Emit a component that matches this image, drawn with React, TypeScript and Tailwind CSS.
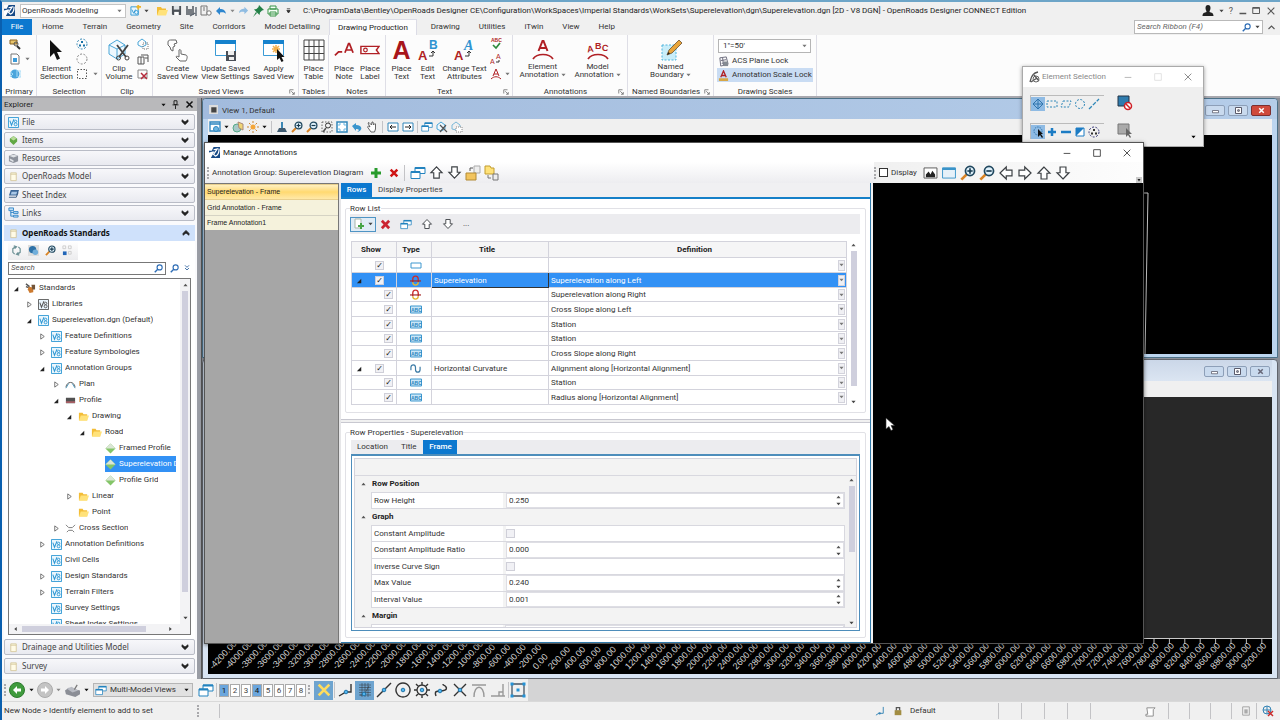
import type { ReactNode } from "react";

interface IconProps {
  children: ReactNode;
  box?: string;
  className?: string;
}

const Icon = ({ children, box = "0 0 12 12", className = "size-3" }: IconProps) => (
  <svg viewBox={box} className={`shrink-0 ${className}`} fill="none" aria-hidden="true">
    {children}
  </svg>
);

const Caret = ({ className = "text-[#444]" }: { className?: string }) => (
  <Icon box="0 0 6 4" className={`h-[4px] w-[5px] ${className}`}>
    <path d="M0.5 0.5h5L3 3.5z" fill="currentColor" />
  </Icon>
);

const UpCaret = () => (
  <Icon box="0 0 6 4" className="h-[4px] w-[5px] text-[#555]">
    <path d="M0.5 3.5h5L3 0.5z" fill="currentColor" />
  </Icon>
);

const Logo = ({ className = "size-[11px]" }: { className?: string }) => (
  <Icon className={className}>
    <path d="M0 0h12v12H0z" fill="#174a86" />
    <path d="M0 0h5L3 4H0zM0 6c3-1 5-1 6-1L2 12H0z" fill="#fff" />
    <path d="M5 3l4-1-4 6 2 2c3-1 4-4 4-8" stroke="#fff" strokeWidth="1.3" />
  </Icon>
);

const V8 = ({ dark = false }: { dark?: boolean }) => (
  <Icon className={dark ? "size-[11px] text-[#555]" : "size-[11px] text-[#2d97d3]"}>
    <path d="M0.5 0.5h11v11H.5z" stroke="currentColor" fill="#eaf6fd" />
    <path d="M2 4l1.8 5L6.5 2.5" stroke="currentColor" strokeWidth="1.1" />
    <circle cx="8.3" cy="4.8" r="1.3" stroke="currentColor" />
    <circle cx="8.3" cy="8" r="1.6" stroke="currentColor" />
  </Icon>
);

const Magnifier = ({ sign = "", className = "size-[13px]" }: { sign?: "" | "+" | "-"; className?: string }) => (
  <Icon className={className}>
    <path d="M5 7L1 11" stroke="#d98324" strokeWidth="2" />
    <circle cx="7.5" cy="4.5" r="3.4" stroke="#21485f" strokeWidth="1.3" fill="#dff1fb" />
    {sign && <path d={sign === "+" ? "M5.5 4.5h4M7.5 2.5v4" : "M5.5 4.5h4"} stroke="#16384d" strokeWidth="1.2" />}
  </Icon>
);

const SearchGlyph = ({ className = "size-[9px]" }: { className?: string }) => (
  <Icon className={className}>
    <circle cx="7.5" cy="4.5" r="3.4" stroke="#2d6cb5" strokeWidth="1.5" />
    <path d="M5 7L1 11" stroke="#2d6cb5" strokeWidth="1.8" />
  </Icon>
);

const arrowTurns = {
  up: "rotate-0",
  right: "rotate-90",
  down: "rotate-180",
  left: "-rotate-90",
};

const BlockArrow = ({ to, className = "size-3" }: { to: keyof typeof arrowTurns; className?: string }) => (
  <Icon className={`${className} ${arrowTurns[to]}`}>
    <path d="M6 1.5L1.5 6.2h2.3v4.3h4.4V6.2h2.3z" stroke="#3c4044" strokeWidth="0.9" fill="#fff" />
  </Icon>
);

const Windows = ({ className = "h-[13px] w-[15px]" }: { className?: string }) => (
  <Icon box="0 0 16 13" className={className}>
    <path d="M5 1h10v6H5z" stroke="#2383bf" fill="#fff" />
    <path d="M5 1.5h10" stroke="#2383bf" strokeWidth="2" />
    <path d="M1 5h9v7H1z" stroke="#2383bf" fill="#fff" />
    <path d="M1 5.5h9" stroke="#2383bf" strokeWidth="2" />
  </Icon>
);

const Cross = ({ className = "size-[10px] text-[#cf1414]" }: { className?: string }) => (
  <Icon className={className}>
    <path d="M2 2l8 8M10 2l-8 8" stroke="currentColor" strokeWidth="3" />
  </Icon>
);

const Folder = ({ className = "size-[11px]" }: { className?: string }) => (
  <Icon className={className}>
    <path d="M1 2h4l1 1.5h4V10H1z" fill="#f3bd37" />
    <path d="M3 5h9l-2 5.5H1z" fill="#ffe27a" />
  </Icon>
);

const Doc = () => (
  <Icon className="size-[11px]">
    <path d="M3 2h6v8.5H3z" fill="#fffbe6" stroke="#cdbf8d" strokeWidth="0.8" />
    <path d="M3 3.5h6" stroke="#cdbf8d" strokeWidth="0.8" />
  </Icon>
);

const Floppy = ({ className = "size-[11px]" }: { className?: string }) => (
  <Icon className={className}>
    <path d="M1 1h10v10H2L1 10z" fill="#4c5157" />
    <path d="M3 1h6v4H3z" fill="#dfe3e6" />
    <path d="M3.5 7.5h5V11h-5z" fill="#fff" />
  </Icon>
);

const Divider = ({ className = "h-3" }: { className?: string }) => (
  <span className={`w-px shrink-0 bg-[#c3c3c6] ${className}`} />
);

const Grip = () => <span className="h-3 w-0 shrink-0 border-l-2 border-dotted border-[#a9a9ac]" />;

const MinMaxClose = () => (
  <div className="flex items-center gap-5 text-[#333]">
    <button aria-label="Minimize">
      <Icon className="size-[10px]"><path d="M2 6.5h8" stroke="currentColor" /></Icon>
    </button>
    <button aria-label="Maximize">
      <Icon className="size-[10px]"><path d="M2 2h8v8H2z" stroke="currentColor" /></Icon>
    </button>
    <button aria-label="Close">
      <Icon className="size-[10px]"><path d="M2 2l8 8M10 2l-8 8" stroke="currentColor" /></Icon>
    </button>
  </div>
);

const TitleBar = () => (
  <header className="flex h-[17px] items-center bg-[#f0f0f0] pr-1 pl-[2px]">
    <Logo />
    <div className="ml-[5px] flex h-[14px] w-[106px] items-center border border-[#c4c4c4] bg-white pr-[3px]">
      <select aria-label="Workflow" className="w-full appearance-none pl-px leading-[11px]">
        <option>OpenRoads Modeling</option>
      </select>
      <Caret className="text-[#777]" />
    </div>
    <div className="ml-1 flex items-center gap-[3px]">
      <Icon className="size-[11px]">
        <path d="M1 2h8v9H1z" stroke="#2d97d3" fill="#eaf6fd" />
        <path d="M2 5l2 4 2-4" stroke="#2d97d3" />
        <circle cx="7" cy="8" r="2" stroke="#2d97d3" />
        <path d="M9 0v5M7 2h5" stroke="#f0b429" strokeWidth="2" />
      </Icon>
      <Caret />
      <span className="ml-1"><Folder className="size-3" /></span>
      <Floppy />
      <Icon className="size-3">
        <path d="M1 1h8v9H1z" fill="#777c82" />
        <path d="M3 1h4v3H3z" fill="#eee" />
        <path d="M11 2v9M5 11l5-3" stroke="#5d6570" strokeWidth="1.4" />
      </Icon>
      <Icon className="size-3">
        <path d="M1 1h6v9H1zM3 3h2M3 5h2" stroke="#777" />
        <circle cx="9" cy="8" r="2.2" stroke="#777" fill="#fff" />
      </Icon>
      <Icon className="size-3"><path d="M5 2L1 6l4 4V7.5c3-.5 5 0 6 1.5-.5-4-3-5-6-5z" fill="#2d86cf" /></Icon>
      <Caret className="text-[#888]" />
      <Icon className="size-[11px] -scale-x-100"><path d="M5 2L1 6l4 4V7.5c3-.5 5 0 6 1.5-.5-4-3-5-6-5z" fill="#8fbce2" /></Icon>
      <Icon className="size-3">
        <path d="M7 0l5 5-2 .5-2 2L7.5 10 2 4.5 4.5 4l2-2zM4 7l1 1-4 4z" fill="#238047" />
      </Icon>
      <Icon className="size-3">
        <path d="M3 1h6v3H3zM1 4h10v5H1zM3 7h6v4H3z" stroke="#3b9449" fill="#f5fff6" />
      </Icon>
      <Icon box="0 0 6 6" className="ml-1 size-[5px]"><path d="M1 1h4M1 3h4L3 6z" stroke="#333" fill="#333" /></Icon>
    </div>
    <h1 className="ml-[12px] whitespace-nowrap text-[#222]">
      C:\ProgramData\Bentley\OpenRoads Designer CE\Configuration\WorkSpaces\Imperial Standards\WorkSets\Superelevation\dgn\Superelevation.dgn [2D - V8 DGN] - OpenRoads Designer CONNECT Edition
    </h1>
    <div className="ml-auto flex items-center gap-[5px] text-[#555]">
      <Icon><path d="M3.5 3a2.5 3 0 0 1 5 0c0 2-1 2.5-1 4 2 .5 4 1 4 4H.5c0-3 2-3.5 4-4 0-1.5-1-2-1-4z" fill="#222" /></Icon>
      <Caret />
      <button className="text-[9px]">?</button>
      <button aria-label="Minimize application"><Icon className="size-[9px]"><path d="M2 10h9" stroke="currentColor" strokeWidth="2" /></Icon></button>
      <button aria-label="Restore application"><Icon className="size-[9px]"><path d="M1 2h9v8H1zM1 3h9" stroke="currentColor" strokeWidth="1.3" /></Icon></button>
      <button aria-label="Close application"><Icon className="size-[10px]"><path d="M2 2l8 8M10 2l-8 8" stroke="currentColor" strokeWidth="1.3" /></Icon></button>
    </div>
  </header>
);

const tabs = ["Home", "Terrain", "Geometry", "Site", "Corridors", "Model Detailing", "Drawing Production", "Drawing", "Utilities", "iTwin", "View", "Help"];

const RibbonTabs = () => (
  <nav className="flex h-4 items-stretch bg-[#f0f0f0]">
    <button className="w-[30px] bg-[#0c78cf] text-white">File</button>
    {tabs.map((tab) => (
      <button
        key={tab}
        className={
          tab === "Drawing Production"
            ? "mr-1 border border-b-0 border-[#dcdce6] bg-[#fdfdfd] px-2 text-[#222]"
            : "pr-[9px] pl-[10px] text-[#333]"
        }
      >
        {tab}
      </button>
    ))}
    <div className="mr-1 ml-auto flex items-center gap-1">
      <div className="flex h-[14px] w-[129px] items-center gap-1 border border-[#b9b9b9] bg-white px-[2px]">
        <input aria-label="Search ribbon" placeholder="Search Ribbon (F4)" className="min-w-0 flex-1 italic outline-none placeholder:text-[#666]" />
        <SearchGlyph />
        <Caret />
      </div>
      <Icon className="size-[9px]"><path d="M2 8l4-4 4 4" stroke="#555" strokeWidth="1.5" /></Icon>
    </div>
  </nav>
);

interface ToolProps {
  icon: ReactNode;
  lines: [string, string];
  menu?: boolean;
  className?: string;
}

const Tool = ({ icon, lines, menu, className = "" }: ToolProps) => (
  <button className={`flex shrink-0 flex-col items-center justify-start text-[#333] ${className}`}>
    <span className="flex h-6 items-center">{icon}</span>
    <span className={`leading-[8px] whitespace-nowrap ${menu ? "mt-px" : "mt-[3px]"}`}>{lines[0]}</span>
    <span className="flex items-center gap-[2px] leading-[8px] whitespace-nowrap">
      {lines[1]}
      {menu && <Caret className="text-[#777]" />}
    </span>
  </button>
);

interface GroupProps {
  title: string;
  children: ReactNode;
  launcher?: boolean;
  className: string;
}

const Group = ({ title, children, launcher, className }: GroupProps) => (
  <section className={`flex shrink-0 flex-col border-r border-[#dedee6] ${className}`}>
    <div className="flex flex-1 justify-center pt-[3px]">{children}</div>
    <div className="flex h-2 items-center text-[#333]">
      <span className="flex-1 text-center whitespace-nowrap">{title}</span>
      {launcher && (
        <button aria-label={`${title} settings`} className="mr-[3px]">
          <Icon box="0 0 8 8" className="size-[6px]"><path d="M1 6V1h5M3 3l4 4M7 4v3H4" stroke="#666" /></Icon>
        </button>
      )}
    </div>
  </section>
);

const SmallStack = ({ children, className = "" }: { children: ReactNode; className?: string }) => (
  <div className={`flex flex-col items-start gap-[3px] ${className}`}>{children}</div>
);

const Ribbon = () => (
  <div className="flex h-[63px] border-b-2 border-[#a8a8ae] bg-[#fcfcfc]">
    <Group title="Primary" className="w-[35px]">
      <SmallStack>
        <Icon><path d="M1 2h7v4H1z" fill="#e8c46a" stroke="#866020" /><circle cx="7" cy="6" r="2" stroke="#555" /><path d="M8 8l3 3" stroke="#333" strokeWidth="2" /></Icon>
        <div className="flex items-center gap-1">
          <Icon><path d="M2 1h6l2 2v8H2z" stroke="#777" fill="#fff" /><path d="M4 5h4v4H4z" fill="#3a9ad9" /></Icon>
          <Caret className="text-[#777]" />
        </div>
        <Icon><circle cx="6" cy="6" r="4.5" fill="#4aa5dc" /><path d="M1 4l3 2-3 3M8 2v7M9 3h3v6H9" stroke="#a8dcf7" /></Icon>
      </SmallStack>
    </Group>
    <Group title="Selection" className="w-[65px]">
      <Tool
        lines={["Element", "Selection"]}
        icon={<Icon box="0 0 16 24" className="h-6 w-4"><path d="M2 2v17l4-4 3 7 3-1.5-3-6.5h5z" fill="#111" /></Icon>}
      />
      <SmallStack className="ml-[3px]">
        <Icon><circle cx="6" cy="6" r="5" stroke="#3688b5" strokeDasharray="2 1.5" /><path d="M5 4h2M3 7.5h2M7 7.5h2" stroke="#1672a8" strokeWidth="1.8" /></Icon>
        <Icon><circle cx="6" cy="6" r="5" stroke="#888" strokeDasharray="2 1.5" /></Icon>
        <div className="flex items-center gap-[5px]">
          <Icon><path d="M1.5 1.5h9v9h-9z" stroke="#555" strokeDasharray="1.5 1.5" /></Icon>
          <Caret className="text-[#777]" />
        </div>
      </SmallStack>
    </Group>
    <Group title="Clip" className="w-[51px]">
      <Tool
        lines={["Clip", "Volume"]}
        icon={
          <Icon box="0 0 24 24" className="size-6">
            <path d="M2 7l8-5 8 5v9l-8 5-8-5zM2 7l8 4 8-4M10 11v9" stroke="#4aa6d8" fill="#eef8fe" />
            <path d="M10 7l9 12M21 7l-9 12" stroke="#444" strokeWidth="1.8" />
            <circle cx="11.5" cy="20" r="2" stroke="#444" /><circle cx="20" cy="20" r="2" stroke="#444" />
          </Icon>
        }
      />
      <SmallStack className="ml-1">
        <Icon><path d="M1 4l4-3 4 3v3L5 9 1 7z" stroke="#4aa6d8" /><path d="M6 5h5v6H6z" stroke="#777" strokeDasharray="1 1" /></Icon>
        <Icon><path d="M1 4h6v7H1zM4 2h7v7M8 5h3M4 4v7" stroke="#555" /></Icon>
        <Icon><path d="M1 2h9v8H1z" stroke="#888" /><path d="M4 5l6 6M10 5l-6 6" stroke="#b52a3b" strokeWidth="1.5" /></Icon>
      </SmallStack>
    </Group>
    <Group title="Saved Views" launcher className="w-[146px]">
      <Tool
        className="w-[44px]"
        lines={["Create", "Saved View"]}
        icon={
          <Icon box="0 0 24 24" className="size-6">
            <path d="M2 4c0-2 2-2 4-2h4l1 3-3 1 1 2-2 1v4l-2-1-1-3-2-2zM13 12c1-1 2 0 2 1v3l5 1c2 1 1 4 0 6h-6l-4-4c0-1 1-1 3 0z" stroke="#666" fill="#fff" />
          </Icon>
        }
      />
      <Tool
        className="w-[52px]"
        lines={["Update Saved", "View Settings"]}
        icon={
          <Icon box="0 0 24 24" className="size-6">
            <path d="M1.5 2.5h20v15h-20z" stroke="#3a9bd6" fill="#fff" /><path d="M1 2h21v4H1z" fill="#1682cd" />
            <path d="M12 13h10v10H12z" fill="#4a4f57" /><path d="M14 13h6v4h-6zM15 19h5v3h-5z" fill="#eee" />
          </Icon>
        }
      />
      <Tool
        className="w-[44px]"
        lines={["Apply", "Saved View"]}
        icon={
          <Icon box="0 0 24 24" className="size-6">
            <path d="M1.5 2.5h20v15h-20z" stroke="#3a9bd6" fill="#fff" /><path d="M1 2h21v4H1z" fill="#1682cd" />
            <path d="M14 7v8M10 11h8M11 8l6 6M17 8l-6 6" stroke="#f3b04c" strokeWidth="1.5" />
            <path d="M15 11v11l2.5-2 2 4 2-1-2-4h3z" fill="#111" />
          </Icon>
        }
      />
    </Group>
    <Group title="Tables" className="w-[30px]">
      <Tool
        lines={["Place", "Table"]}
        icon={<Icon box="0 0 24 24" className="size-6"><path d="M2 2h20v20H2zM7 2v20M12 2v20M17 2v20M2 8.5h20M2 15.5h20" stroke="#444" /></Icon>}
      />
    </Group>
    <Group title="Notes" className="w-[57px]">
      <Tool
        className="w-[26px]"
        lines={["Place", "Note"]}
        icon={<Icon box="0 0 22 22" className="h-[22px] w-5"><path d="M1 17l4-4h4M12 14l4-10h1l4 10M14 11h5" stroke="#b01f24" strokeWidth="1.9" /></Icon>}
      />
      <Tool
        className="w-[26px]"
        lines={["Place", "Label"]}
        icon={<Icon box="0 0 22 22" className="h-[22px] w-5"><path d="M1 7h20l-3 4 3 4H1z" stroke="#b01f24" strokeWidth="1.6" /><circle cx="6" cy="11" r="2" stroke="#b01f24" strokeWidth="1.3" /></Icon>}
      />
    </Group>
    <Group title="Text" launcher className="w-[127px]">
      <Tool
        className="w-[26px]"
        lines={["Place", "Text"]}
        icon={<span className="font-['Liberation_Sans'] text-[25px] leading-6 font-bold text-[#a8151b]">A</span>}
      />
      <Tool
        className="w-[26px]"
        lines={["Edit", "Text"]}
        icon={
          <Icon box="0 0 22 24" className="h-6 w-[22px]">
            <text x="1" y="22" fontSize="13" fontWeight="bold" fill="#b01f24" fontFamily="Liberation Sans">A</text>
            <text x="12" y="11" fontSize="12" fontWeight="bold" fill="#2f93d1" fontFamily="Liberation Sans">B</text>
            <path d="M12 18h4v-5M14 15l2-2 2 2" stroke="#333" />
          </Icon>
        }
      />
      <Tool
        className="w-[48px]"
        lines={["Change Text", "Attributes"]}
        icon={
          <Icon box="0 0 22 24" className="h-6 w-[22px]">
            <text x="0" y="22" fontSize="13" fontWeight="bold" fill="#b01f24" fontFamily="Liberation Sans">A</text>
            <text x="10" y="12" fontSize="14" fontStyle="italic" fontWeight="bold" fill="#2f93d1" fontFamily="Liberation Serif">A</text>
            <path d="M11 18h4v-5M13 15l2-2 2 2" stroke="#333" />
          </Icon>
        }
      />
      <SmallStack className="ml-px">
        <Icon><text x="1" y="4" fontSize="5" fontWeight="bold" fill="#b01f24" fontFamily="Liberation Sans">ABC</text><path d="M3 7l3 3 4-5" stroke="#2e8b3d" strokeWidth="1.7" /></Icon>
        <Icon><text x="0" y="11" fontSize="7" fill="#b01f24" fontFamily="Liberation Sans">A</text><text x="6" y="6" fontSize="7" fill="#b01f24" fontFamily="Liberation Sans">A</text><path d="M6 9h3V7" stroke="#333" /></Icon>
        <div className="flex items-center gap-[3px]">
          <Icon><path d="M3 8l3-7 3 7M4 6h4M1 11c3-3 7-3 10 0" stroke="#b01f24" /></Icon>
          <Caret className="text-[#777]" />
        </div>
      </SmallStack>
    </Group>
    <Group title="Annotations" launcher className="w-[115px]">
      <Tool
        menu
        className="w-[55px]"
        lines={["Element", "Annotation"]}
        icon={<Icon box="0 0 24 24" className="size-6"><path d="M7.5 13L11.5 3h1l4 10M9 10h6" stroke="#b01f24" strokeWidth="2" /><path d="M2 21c4-6 16-6 20 0" stroke="#b01f24" strokeWidth="1.7" /></Icon>}
      />
      <Tool
        menu
        className="w-[55px]"
        lines={["Model", "Annotation"]}
        icon={
          <Icon box="0 0 24 24" className="size-6">
            <text x="1" y="14" fontSize="9" fontWeight="bold" fill="#b01f24" fontFamily="Liberation Sans" transform="rotate(-8 4 11)">A</text>
            <text x="9" y="11" fontSize="9" fontWeight="bold" fill="#b01f24" fontFamily="Liberation Sans">B</text>
            <text x="16" y="13" fontSize="9" fontWeight="bold" fill="#b01f24" fontFamily="Liberation Sans" transform="rotate(8 19 10)">C</text>
            <path d="M2 21c4-6 16-6 20 0" stroke="#b01f24" strokeWidth="1.7" />
          </Icon>
        }
      />
    </Group>
    <Group title="Named Boundaries" launcher className="w-[86px]">
      <Tool
        menu
        lines={["Named", "Boundary"]}
        icon={
          <Icon box="0 0 24 24" className="size-6">
            <path d="M3 7h14v15H3z" stroke="#51b5dd" fill="#c8edf9" strokeDasharray="2 1.5" />
            <path d="M8 17l2-5L20 2l3 3-10 10z" fill="#e9a53b" stroke="#6b5030" strokeWidth="0.8" />
            <path d="M8 17l1.5-3 1.5 1.5z" fill="#222" />
          </Icon>
        }
      />
    </Group>
    <Group title="Drawing Scales" className="w-[103px]">
      <div className="flex w-[96px] flex-col text-[#333]">
        <div className="mt-px ml-px flex h-[14px] w-[93px] items-center border border-[#b5b5b5] bg-white pr-[3px]">
          <select aria-label="Annotation scale" className="w-full appearance-none pl-1 leading-3">
            <option>1"=50'</option>
          </select>
          <Caret className="text-[#777]" />
        </div>
        <button className="mt-px flex h-[14px] items-center gap-[3px] pl-px">
          <Icon className="size-[11px]"><path d="M2 2l7-1 2 8-8 2zM3 5l6-1M4 8l6-1M5 2l1 8" stroke="#667" /><path d="M6 6h5v5H6z" fill="#858b93" /></Icon>
          ACS Plane Lock
        </button>
        <button className="flex h-[14px] items-center gap-[3px] bg-[#c9dcf3] pl-px whitespace-nowrap">
          <Icon className="size-[11px]"><path d="M3 8l3-7 3 7M4 6h4" stroke="#b01f24" strokeWidth="1.4" /><path d="M1 9h10v3H1z" fill="#d7a747" /></Icon>
          Annotation Scale Lock
        </button>
      </div>
    </Group>
  </div>
);

const DoubleChevron = ({ up = false }: { up?: boolean }) => (
  <Icon box="0 0 10 8" className={`h-[6px] w-2 ${up ? "rotate-180" : ""}`}>
    <path d="M1 1l4 3 4-3v2.5L5 7.5 1 3.5z" fill="#222" stroke="#222" />
  </Icon>
);

const Section = ({ icon, label }: { icon: ReactNode; label: string }) => (
  <button className="flex h-4 w-full items-center gap-[3px] rounded-[2px] border border-[#b9bcc6] bg-linear-to-b from-[#f7f7fa] to-[#e9eaf0] pr-[5px] pl-[3px] text-left font-['Noto_Sans'] text-[#444]">
    {icon}
    <span className="flex-1">{label}</span>
    <DoubleChevron />
  </button>
);

const sections = [
  { label: "File", icon: <V8 /> },
  { label: "Items", icon: <Icon className="size-[11px]"><path d="M6 1l4 3v3l-4 4-4-4V4z" fill="#62a845" /><path d="M6 1l3 3-3 2-3-2z" fill="#b9dc9a" /></Icon> },
  { label: "Resources", icon: <Icon className="size-[11px]"><path d="M1 3l5-2 5 2v6l-5 2-5-2z" fill="#8d929c" /><path d="M1 3l5-1 5 1-5 2zM2 6l4 2v2L2 8z" fill="#dfe2e6" /></Icon> },
  { label: "OpenRoads Model", icon: <Doc /> },
  { label: "Sheet Index", icon: <Icon className="size-[11px]"><path d="M3 1h9l-2 6H1z" fill="#3c6697" /><path d="M4 3h6L9 6H3z" fill="#a8c6e6" /><path d="M1 9h8l2-5" stroke="#36577e" /></Icon> },
  { label: "Links", icon: <Icon className="size-[11px]"><path d="M1 1h5v3H1zM6 5h5v2H6zM6 9h5v2H6zM3 4v6h3M3 6h3" stroke="#3486c7" fill="#bfe0f7" /></Icon> },
];

type Kind = "root" | "library" | "v8" | "plan" | "profile" | "folder" | "diamond" | "section";

const kindIcons: Record<Kind, ReactNode> = {
  root: <Icon className="size-[11px]"><path d="M1 1l4 3M1 4l3 1" stroke="#555" strokeWidth="1.5" /><path d="M4 4l5 1v5l-4 1-2-4z" fill="#cc7a2f" /><path d="M7 2h4v5H8z" fill="#71543a" /></Icon>,
  library: <V8 dark />,
  v8: <V8 />,
  plan: <Icon className="size-[11px]"><path d="M1 9c1-7 9-7 10 0" stroke="#555" /><path d="M1 10l3-5M8 5l3 5" stroke="#4e99bd" /></Icon>,
  profile: <Icon className="size-[11px]"><path d="M1 3h10v6H1z" fill="#515151" /><path d="M1 7h10v1.5H1z" fill="#c0646b" /></Icon>,
  folder: <Folder />,
  diamond: <Icon className="size-[11px]"><path d="M6 .5L11.5 6 6 11.5.5 6z" fill="#84c568" /><path d="M6 .5L11.5 6H.5z" fill="#dbe6d6" /></Icon>,
  section: <Icon className="size-[11px]"><path d="M1 2l3 3h4l3-3M2 10l2-2h4l2 2" stroke="#777" /></Icon>,
};

interface Node {
  label: string;
  kind: Kind;
  indent: string;
  state?: "open" | "closed";
  selected?: boolean;
}

const nodes: Node[] = [
  { label: "Standards", kind: "root", indent: "pl-1", state: "open" },
  { label: "Libraries", kind: "library", indent: "pl-[17px]", state: "closed" },
  { label: "Superelevation.dgn (Default)", kind: "v8", indent: "pl-[17px]", state: "open" },
  { label: "Feature Definitions", kind: "v8", indent: "pl-[30px]", state: "closed" },
  { label: "Feature Symbologies", kind: "v8", indent: "pl-[30px]", state: "closed" },
  { label: "Annotation Groups", kind: "v8", indent: "pl-[30px]", state: "open" },
  { label: "Plan", kind: "plan", indent: "pl-11", state: "closed" },
  { label: "Profile", kind: "profile", indent: "pl-11", state: "open" },
  { label: "Drawing", kind: "folder", indent: "pl-[57px]", state: "open" },
  { label: "Road", kind: "folder", indent: "pl-[70px]", state: "open" },
  { label: "Framed Profile", kind: "diamond", indent: "pl-[84px]" },
  { label: "Superelevation Diagram", kind: "diamond", indent: "pl-[84px]", selected: true },
  { label: "Profile Grid", kind: "diamond", indent: "pl-[84px]" },
  { label: "Linear", kind: "folder", indent: "pl-[57px]", state: "closed" },
  { label: "Point", kind: "folder", indent: "pl-[57px]" },
  { label: "Cross Section", kind: "section", indent: "pl-11", state: "closed" },
  { label: "Annotation Definitions", kind: "v8", indent: "pl-[30px]", state: "closed" },
  { label: "Civil Cells", kind: "v8", indent: "pl-[30px]" },
  { label: "Design Standards", kind: "v8", indent: "pl-[30px]", state: "closed" },
  { label: "Terrain Filters", kind: "v8", indent: "pl-[30px]", state: "closed" },
  { label: "Survey Settings", kind: "v8", indent: "pl-[30px]" },
  { label: "Sheet Index Settings", kind: "v8", indent: "pl-[30px]" },
];

const Expander = ({ state }: { state?: "open" | "closed" }) => (
  <Icon box="0 0 8 8" className="size-[7px]">
    {state === "open" && <path d="M6 2v5H1z" fill="#222" />}
    {state === "closed" && <path d="M2 1l4 3-4 3z" stroke="#666" />}
  </Icon>
);

const Explorer = () => (
  <aside className="flex w-[195px] shrink-0 flex-col bg-[#fafafc]">
    <div className="flex h-[13px] items-center gap-[5px] bg-[#b9b9bb] pr-[3px] pl-[2px]">
      <h2 className="flex-1 text-[#222]">Explorer</h2>
      <Caret className="text-[#111]" />
      <Icon className="size-[9px]"><path d="M4 1h4v5H4zM2 6.5h8M6 7v5" stroke="#222" strokeWidth="1.3" /></Icon>
      <Icon className="size-[9px]"><path d="M2 2l8 8M10 2l-8 8" stroke="#111" strokeWidth="2" /></Icon>
    </div>
    <div className="grid h-28 grid-rows-6 px-[2px] pt-[3px]">
      {sections.map((s) => <Section key={s.label} {...s} />)}
    </div>
    <button className="mx-[2px] mt-[2px] flex h-4 items-center gap-[3px] bg-[#cfe1fb] pr-[5px] pl-1 text-left font-['Noto_Sans'] font-bold text-[#111]">
      <Doc />
      <span className="flex-1">OpenRoads Standards</span>
      <DoubleChevron up />
    </button>
    <div className="mx-[2px] flex min-h-0 flex-1 flex-col bg-white px-1">
      <div className="flex h-[19px] w-[70px] items-center gap-[6px] bg-linear-to-b from-white to-[#ececee] pl-[3px]">
        <Icon className="size-[11px]"><path d="M5 2L2 4v4l2 2M7 10l3-2V4L8 2M3 1l3 1-2 2M9 11l-3-1 2-2" stroke="#6c9196" strokeWidth="1.3" /></Icon>
        <Icon className="size-[11px]"><path d="M0 0h12v12H0z" fill="#dedede" /><circle cx="5" cy="5" r="4" fill="#2e72a8" /><circle cx="8" cy="8" r="3" fill="#71aeda" /></Icon>
        <Magnifier sign="+" className="size-[11px]" />
        <Icon className="size-[11px]"><path d="M1 1h3v3H1zM7 1h3v3H7zM7 7h3v3H7z" stroke="#ccc" /><path d="M1 7h4v4H1z" fill="#2166b8" /></Icon>
      </div>
      <div className="mt-px flex h-[14px] items-center gap-1 text-[#555]">
        <div className="flex h-[13px] w-[159px] items-center border border-[#777] px-[2px]">
          <input aria-label="Search standards" placeholder="Search" className="min-w-0 flex-1 italic outline-none placeholder:text-[#555]" />
          <SearchGlyph />
        </div>
        <SearchGlyph />
        <Icon className="size-[8px]"><path d="M3 2l3 3 3-3M3 6l3 3 3-3" stroke="#2a5f9e" strokeWidth="1.3" /></Icon>
      </div>
      <div className="mt-[3px] flex min-h-0 flex-1 flex-col border border-[#777] bg-white">
        <div className="flex min-h-0 flex-1">
          <ul className="min-w-0 flex-1 overflow-hidden pt-px pr-1">
            {nodes.map((n) => (
              <li key={n.label} className={`flex h-4 items-center gap-[5px] ${n.indent}`}>
                <Expander state={n.state} />
                <span className={`flex h-full min-w-0 flex-1 items-center gap-[3px] ${n.selected ? "bg-[#3291f5] text-white" : "text-[#333]"}`}>
                  {kindIcons[n.kind]}
                  <span className="overflow-hidden whitespace-nowrap">{n.label}</span>
                </span>
              </li>
            ))}
          </ul>
          <div className="flex w-[10px] flex-col items-center bg-[#f3f3f5] py-1">
            <UpCaret />
            <span className="mt-1 w-[6px] flex-1 bg-[#cfcfdd]" />
            <span className="h-6" />
            <Caret />
          </div>
        </div>
        <div className="flex h-[10px] items-center gap-1 bg-[#f3f3f5] px-1">
          <span className="rotate-90"><Caret /></span>
          <span className="h-[6px] w-[124px] bg-[#cfcfdd]" />
          <span className="mr-[13px] ml-auto -rotate-90"><Caret /></span>
        </div>
      </div>
      <div className="h-1" />
    </div>
    <div className="flex flex-col gap-[3px] px-[2px] pb-[5px]">
      <Section icon={<Doc />} label="Drainage and Utilities Model" />
      <Section icon={<Doc />} label="Survey" />
    </div>
  </aside>
);

const frameButton = "flex h-[11px] w-[20px] items-center justify-center rounded-[2px] border";

const FrameButtons = ({ active = false }: { active?: boolean }) => (
  <div className="flex gap-[3px] pt-[2px]">
    <button aria-label="Minimize view" className={`${frameButton} border-[#8d9fb8] bg-[#c9daee]`}>
      <Icon className="size-[9px]"><path d="M2 6h8v3H2z" stroke="#556" fill="#fff" /></Icon>
    </button>
    <button aria-label="Maximize view" className={`${frameButton} border-[#8d9fb8] bg-[#c9daee]`}>
      <Icon className="size-[9px]"><path d="M2 2h8v8H2zM5 5h2v2H5z" stroke="#556" strokeWidth="1.3" fill="#fff" /></Icon>
    </button>
    <button aria-label="Close view" className={`${frameButton} ${active ? "border-[#7c3030] bg-[#cf4a3c] text-white" : "border-[#8d9fb8] bg-[#c9daee] text-[#667]"}`}>
      <Icon className="size-[9px]"><path d="M3 3l6 6M9 3l-6 6" stroke="currentColor" strokeWidth="2" /></Icon>
    </button>
  </div>
);

const ViewToolbar = () => (
  <div className="flex h-4 items-center gap-[3px] bg-[#f0f0f0] pl-px">
    <Icon><path d="M1 1h10v9H1zM1 3h10" stroke="#2f86c0" fill="#fff" strokeWidth="1.3" /><circle cx="7" cy="8" r="2.5" fill="#6db7e2" stroke="#2f86c0" /></Icon>
    <Caret className="text-[#111]" />
    <Icon><circle cx="5" cy="7" r="4" fill="#a8c9c7" stroke="#5a8" /><path d="M6 1l5 2v6L7 7z" fill="#efd575" stroke="#a87" /></Icon>
    <Icon><circle cx="6" cy="6" r="2.5" fill="#f4a63a" /><path d="M6 0v2M6 10v2M0 6h2M10 6h2M2 2l1.5 1.5M8.5 8.5L10 10M10 2L8.5 3.5M2 10l1.5-1.5" stroke="#c98533" /></Icon>
    <Caret className="text-[#111]" />
    <Divider className="mx-px h-3" />
    <Icon><path d="M5 1h2v6H5z" fill="#3b87b4" /><path d="M3 7h6l2 4H1z" fill="#405c72" /></Icon>
    <Magnifier sign="+" className="size-3" />
    <Magnifier sign="-" className="size-3" />
    <Icon><path d="M1 1h10v10H1z" stroke="#666" strokeDasharray="1.5 1.5" /><circle cx="7" cy="4.5" r="2.5" stroke="#333" /><path d="M5 7l-3 4" stroke="#555" strokeWidth="1.5" /></Icon>
    <Icon><path d="M1 1h10v10H1z" stroke="#3186ba" fill="#fff" strokeWidth="1.5" /><path d="M3 5V3h2M7 3h2v2M9 7v2H7M5 9H3V7" stroke="#69b8e4" /></Icon>
    <Icon><path d="M1 5l4-3v2c7 0 7 6 1 7 3-2 2-3-1-3v2z" fill="#3a95cd" /></Icon>
    <Icon><path d="M5 11L1.5 6l1-1L4 6 2 2l1-.5L5.500 4 6 1h1l.5 3L9 2.500l.5.5v5l-1 3z" stroke="#555" strokeWidth="0.9" fill="#fff" /></Icon>
    <Divider className="mx-px h-3" />
    <Icon><path d="M1 2h10v8H1z" stroke="#3186ba" fill="#fff" /><path d="M9 6H3M5 4L3 6l2 2" stroke="#222" /></Icon>
    <Icon><path d="M1 2h10v8H1z" stroke="#3186ba" fill="#fff" /><path d="M3 6h6M7 4l2 2-2 2" stroke="#222" /></Icon>
    <Divider />
    <Windows className="size-3" />
    <Icon><path d="M1 4l4-3 4 3v4L5 10 1 8z" stroke="#4aa6d8" fill="#eef8fe" /><path d="M4 4l7 7M10 4l-6 7" stroke="#555" strokeWidth="1.2" /></Icon>
    <Icon><path d="M1 4l4-3 4 3v4L5 9 1 8z" stroke="#7bb8d8" /><path d="M5 6h6v5H5z" stroke="#888" strokeDasharray="1 1" fill="#fff" /></Icon>
  </div>
);

const stations = Array.from({ length: 68 }, (_, i) => -4200 + i * 200);

const Stationing = () => (
  <svg viewBox="0 0 1066 36" className="h-9 w-[1066px]" aria-label="Station axis">
    {stations.map((station, i) => (
      <g key={station}>
        <path d={`M${22 + i * 15.4} 0v5`} stroke="#bbb" />
        <text
          x="0"
          y="0"
          transform={`translate(${5 + i * 15.4} 31) rotate(-47)`}
          fill="#d2d2d2"
          fontSize="9"
          fontFamily="Liberation Sans"
        >
          {station.toFixed(2)}
        </text>
      </g>
    ))}
  </svg>
);

const Workspace = () => (
  <main className="flex min-w-0 flex-1 flex-col gap-px overflow-hidden bg-[#8b8f98] pr-[2px]">
    <section className="flex h-[260px] flex-col rounded-t-[4px] border border-[#4c7188] bg-[#bcd5ef] px-[5px] pb-[3px]">
      <div className="-mx-[5px] flex h-5 items-center gap-1 rounded-t-[3px] bg-linear-to-r from-[#a2bbdd] to-[#b5cde9] px-[6px]">
        <Icon className="size-[9px]"><path d="M0 0h12v12H0z" fill="#ddd" /><path d="M3 3h7v7H3z" fill="#444" /></Icon>
        <h2 className="flex-1 pt-[3px] text-[#333]">View 1, Default</h2>
        <FrameButtons active />
      </div>
      <ViewToolbar />
      <div className="flex flex-1 justify-end bg-black">
        <Icon box="0 0 130 219" className="h-[219px] w-[130px]">
          <path d="M0 58h6L3 219" stroke="#c6c6c6" />
        </Icon>
      </div>
    </section>
    <section className="flex min-h-0 flex-1 flex-col rounded-t-[4px] border border-[#60646c] bg-[#d8e4f3] px-[5px] pb-[4px]">
      <div className="flex h-[21px] shrink-0 items-center justify-end bg-linear-to-b from-[#cbd7e8] to-[#dbe5f2] px-[2px]">
        <FrameButtons />
      </div>
      <div className="h-4 shrink-0 bg-[#f0f0f0]" />
      <div className="flex min-h-0 flex-1 flex-col bg-[#282828]">
        <div className="flex-1" />
        <div className="h-9 overflow-hidden border-t border-[#c9c9c9] bg-black">
          <Stationing />
        </div>
      </div>
    </section>
  </main>
);

const Check = ({ label, off = false }: { label: string; off?: boolean }) => (
  <input
    type="checkbox"
    aria-label={label}
    defaultChecked={!off}
    className="block size-[9px] shrink-0 appearance-none border border-[#cfcfd8] bg-[#f1f1f5] text-center font-['DejaVu_Sans'] text-[8px] leading-[8px] text-[#111] checked:before:block checked:before:content-['✓']"
  />
);

const AbcIcon = () => (
  <Icon box="0 0 12 9" className="h-[9px] w-3">
    <path d="M.5 1h11v7H.5z" stroke="#3f98cf" fill="#c9e6f7" />
    <text x="1" y="6.5" fontSize="5" fontWeight="bold" fill="#2a85c0" fontFamily="Liberation Sans">ABC</text>
  </Icon>
);

const SuperIcon = () => (
  <Icon box="0 0 12 12" className="size-[11px]">
    <path d="M3 8V5c0-5 6-5 6 0v3" stroke="#cc2d2d" strokeWidth="1.5" />
    <path d="M3 8c0 4 6 4 6 0" stroke="#e3b534" strokeWidth="1.5" />
    <path d="M0 6.5h12" stroke="#a52a2a" strokeWidth="1.3" />
  </Icon>
);

interface Row {
  type: ReactNode;
  title: string;
  definition: string;
  level: 0 | 1;
  parent?: boolean;
  selected?: boolean;
}

const rows: Row[] = [
  { type: <Icon box="0 0 12 9" className="h-[9px] w-3"><path d="M1 2h10v5H1z" stroke="#3f98cf" fill="#fff" /></Icon>, title: "", definition: "", level: 0 },
  { type: <SuperIcon />, title: "Superelevation", definition: "Superelevation along Left", level: 0, parent: true, selected: true },
  { type: <SuperIcon />, title: "", definition: "Superelevation along Right", level: 1 },
  { type: <AbcIcon />, title: "", definition: "Cross Slope along Left", level: 1 },
  { type: <AbcIcon />, title: "", definition: "Station", level: 1 },
  { type: <AbcIcon />, title: "", definition: "Station", level: 1 },
  { type: <AbcIcon />, title: "", definition: "Cross Slope along Right", level: 1 },
  { type: <Icon className="size-[11px]"><path d="M1 8V5c0-4 5-4 5 0v2c0 4 5 4 5 0V4" stroke="#3c7ba6" strokeWidth="1.3" /></Icon>, title: "Horizontal Curvature", definition: "Alignment along [Horizontal Alignment]", level: 0, parent: true },
  { type: <AbcIcon />, title: "", definition: "Station", level: 1 },
  { type: <AbcIcon />, title: "", definition: "Radius along [Horizontal Alignment]", level: 1 },
];

const RowTable = () => (
  <table className="w-full table-fixed border-collapse text-left">
    <colgroup>
      <col className="w-[45px]" />
      <col className="w-[35px]" />
      <col className="w-[117px]" />
      <col />
    </colgroup>
    <thead>
      <tr className="h-4 bg-[#f5f5f6] text-center text-[#222]">
        {["Show", "Type", "Title", "Definition"].map((h) => (
          <th key={h} className="border border-[#d3d3dc] p-0 pr-[6px] font-bold">{h}</th>
        ))}
      </tr>
    </thead>
    <tbody className="[&>tr]:h-[15px] [&>tr:nth-child(3n)]:h-[14px]">
      {rows.map((row, i) => (
        <tr key={i} className={row.selected ? "bg-[#3291f5] text-white" : "bg-white text-[#333]"}>
          <td className="border border-[#d3d3dc] p-0">
            <div className={`flex items-center ${row.level ? "pl-8" : "gap-3 pl-1"}`}>
              {row.level === 0 && <Expander state={row.parent ? "open" : undefined} />}
              <Check label={`Show row ${i + 1}`} />
            </div>
          </td>
          <td className="border border-[#d3d3dc] p-0">
            <div className="flex h-[11px] items-center justify-center pl-[3px]">{row.type}</div>
          </td>
          <td className={`border p-0 pl-[2px] leading-[11px] ${row.selected ? "border-[#333]" : "border-[#d3d3dc]"}`}>{row.title}</td>
          <td className="border border-[#d3d3dc] p-0">
            <div className="flex h-[11px] items-center pl-[2px]">
              <select aria-label={`Definition ${i + 1}`} className="min-w-0 flex-1 appearance-none leading-[11px]">
                <option>{row.definition}</option>
              </select>
              <span className="mr-px flex h-[11px] w-[7px] items-center border border-[#d3d3dc] bg-[#f0f0f4]"><Caret className="text-[#777]" /></span>
            </div>
          </td>
        </tr>
      ))}
    </tbody>
  </table>
);

const Category = ({ title }: { title: string }) => (
  <div className="flex h-4 items-center gap-[6px] pl-[6px] font-bold text-[#222]">
    <UpCaret />
    {title}
  </div>
);

const Property = ({ label, value }: { label: string; value?: string }) => (
  <label className="flex items-stretch border-t border-l border-[#d8d8df] bg-white">
    <span className="flex w-[131px] items-center pl-[2px]">{label}</span>
    <span className="w-[3px] bg-[#f3f3f3]" />
    {value ? (
      <span className="flex flex-1 items-center border border-[#dedee4]">
        <input defaultValue={value} className="min-w-0 flex-1 pl-[2px] outline-none" />
        <span className="flex flex-col gap-[3px] pr-[2px]"><UpCaret /><Caret /></span>
      </span>
    ) : (
      <span className="flex items-center"><Check off label={label} /></span>
    )}
  </label>
);

const propertyList = "mr-[2px] ml-4 border-r border-b border-[#d8d8df] [&>label]:h-4 [&>label:nth-child(even)]:h-[17px]";

const ScrollBar = ({ thumb, className = "" }: { thumb: string; className?: string }) => (
  <div className={`flex w-[9px] shrink-0 flex-col items-center py-[2px] ${className}`}>
    <UpCaret />
    <span className={`mt-1 w-[6px] bg-[#cfcfdd] ${thumb}`} />
    <span className="flex-1" />
    <Caret />
  </div>
);

const RowsPane = () => (
  <div className="flex w-[530px] flex-col border-r border-b border-[#2f78a8] bg-white">
    <div className="flex h-4 shrink-0 items-stretch border-b-2 border-[#1580c8] bg-[#f0f0f2]">
      <button className="w-[31px] bg-[#0c78cf] font-medium text-white">Rows</button>
      <button className="px-[6px] text-[#444]">Display Properties</button>
    </div>
    <fieldset className="mx-1 mt-1 flex h-[210px] shrink-0 flex-col rounded-[2px] border border-[#e1e1e6] px-[5px]">
      <legend className="-ml-px leading-[11px] text-[#333]">Row List</legend>
      <div className="-ml-px flex h-5 shrink-0 items-center gap-1 bg-[#ececef]">
        <button aria-label="Add row" className="flex h-[15px] w-[26px] items-center justify-center gap-[3px] border border-[#4f94c4] bg-[#e0ecf6]">
          <Icon><path d="M2 1h6v9H2z" stroke="#a9b5aa" fill="#fff" /><path d="M8 5v6M5 8h6" stroke="#46a546" strokeWidth="2" /></Icon>
          <Caret />
        </button>
        <div className="flex items-center gap-[9px]">
          <Cross className="size-[11px] text-[#cb2431]" />
          <Windows className="h-[11px] w-3" />
          <BlockArrow to="up" className="size-3" />
          <BlockArrow to="down" className="size-3" />
          <span>...</span>
        </div>
      </div>
      <div className="mt-[7px] flex min-h-0 flex-1">
        <div className="h-[165px] min-w-0 flex-1 overflow-hidden"><RowTable /></div>
        <ScrollBar thumb="h-[135px]" className="mr-[2px] ml-[2px] h-[165px]" />
      </div>
    </fieldset>
    <div className="mt-[6px] h-1 shrink-0 border-y border-[#c8c8d0] bg-[#f0f0f0]" />
    <fieldset className="mx-1 mt-1 mb-1 flex min-h-0 flex-1 flex-col rounded-[2px] border border-[#e1e1e6] px-[5px] pb-[6px]">
      <legend className="-ml-px leading-[11px] text-[#333]">Row Properties - Superelevation</legend>
      <div className="mt-[2px] flex h-[14px] shrink-0 items-stretch bg-[#ececef] text-[#333]">
        <button className="px-[6px]">Location</button>
        <button className="px-[7px]">Title</button>
        <button className="w-[34px] bg-[#0c78cf] font-medium text-white">Frame</button>
      </div>
      <div className="flex min-h-0 flex-1 flex-col border border-t-2 border-[#4d8dbb] p-[2px]">
        <div className="flex min-h-0 flex-1 flex-col border border-[#d3d3dc] bg-[#f3f3f3]">
          <div className="h-[17px] shrink-0 border-b border-[#d8d8df]" />
          <div className="flex min-h-0 flex-1">
            <div className="min-w-0 flex-1 overflow-hidden text-[#333]">
              <Category title="Row Position" />
              <div className={propertyList}><Property label="Row Height" value="0.250" /></div>
              <Category title="Graph" />
              <div className={propertyList}>
                <Property label="Constant Amplitude" />
                <Property label="Constant Amplitude Ratio" value="0.000" />
                <Property label="Inverse Curve Sign" />
                <Property label="Max Value" value="0.240" />
                <Property label="Interval Value" value="0.001" />
              </div>
              <Category title="Margin" />
              <div className="mr-[2px] ml-4 flex h-4 border border-[#d8d8df] bg-white">
                <span className="w-[133px] border-r-2 border-[#f3f3f3]" />
                <span className="flex-1 border border-[#dedee4]" />
              </div>
            </div>
            <ScrollBar thumb="h-[66px]" />
          </div>
        </div>
      </div>
    </fieldset>
  </div>
);

const ManageAnnotations = () => (
  <section className="absolute top-[142px] left-[204px] flex h-[502px] w-[940px] flex-col border border-[#555] bg-[#f2f2f3] shadow-[0_1px_4px_#0008]">
    <header className="flex h-[19px] shrink-0 items-center bg-white pr-[11px] pl-1">
      <Logo />
      <h2 className="ml-[3px] flex-1 text-[#222]">Manage Annotations</h2>
      <MinMaxClose />
    </header>
    <div className="flex h-[21px] shrink-0 items-center bg-linear-to-b from-white to-[#ededf0] pl-[2px]">
      <Grip />
      <span className="ml-[3px] w-[152px] text-[#333]">Annotation Group: Superelevation Diagram</span>
      <div className="ml-[6px] flex items-center gap-[7px]">
        <Icon><path d="M6 1v10M1 6h10" stroke="#289b2c" strokeWidth="3" /></Icon>
        <Cross />
      </div>
      <Divider className="mx-[5px] h-4" />
      <div className="flex items-center gap-[3px]">
        <Windows className="h-[14px] w-4" />
        <BlockArrow to="up" className="size-[15px]" />
        <BlockArrow to="down" className="size-[15px]" />
        <Icon box="0 0 16 16" className="size-4">
          <path d="M9 1h6v7H9z" fill="#eee" stroke="#aaa" /><path d="M1 8h10v7H1z" fill="#f2c45e" stroke="#b28a35" /><path d="M5 6V3h3" stroke="#555" />
        </Icon>
        <Icon box="0 0 16 16" className="size-4">
          <path d="M1 1h5l1 2h3v6H1z" fill="#ffe27a" stroke="#c29c2c" /><path d="M4 10v3h3M9 9h5v6H9z" stroke="#777" fill="#eee" />
        </Icon>
      </div>
      <div className="ml-auto flex w-[269px] items-center gap-[3px] self-stretch bg-linear-to-r from-[#f0f0f0] to-[#fdfdfd]">
        <Grip />
        <label className="mr-px flex w-[40px] items-center gap-[3px] text-[#333]">
          <input type="checkbox" className="size-[9px] appearance-none border border-[#333] bg-white" />
          Display
        </label>
        <Icon box="0 0 16 13" className="h-3 w-[15px]"><path d="M1 1h14v11H1z" stroke="#555" fill="#fff" /><path d="M3 11V8l3-3 2 3 2-4 3 4v3z" fill="#222" /></Icon>
        <Icon box="0 0 16 13" className="h-3 w-4"><path d="M1 1h14v11H1z" stroke="#3a94c9" fill="#e6f1f9" /><path d="M1 2h14" stroke="#3a94c9" strokeWidth="2.5" /></Icon>
        <Magnifier sign="+" className="size-4" />
        <Magnifier sign="-" className="size-4" />
        <BlockArrow to="left" className="size-4" />
        <BlockArrow to="right" className="size-4" />
        <BlockArrow to="up" className="size-4" />
        <BlockArrow to="down" className="size-4" />
        <span className="mr-px ml-auto self-end"><Icon className="size-[6px]"><path d="M0 0h12v12H0z" fill="#ccc" /><path d="M3 4h6L6 9z" fill="#222" /></Icon></span>
      </div>
    </div>
    <div className="flex min-h-0 flex-1">
      <ul className="w-[133px] shrink-0 border-t border-[#777] bg-[#a6a6a6] font-['Liberation_Sans'] text-[7px] text-[#222]">
        <li className="flex h-4 items-center border-y border-[#e8cf8e] bg-linear-to-b from-[#fff0c0] via-[#ffd970] to-[#ffe9a8] pl-[2px]">Superelevation - Frame</li>
        <li className="flex h-4 items-center border-b border-[#d5d3c4] bg-[#f5f2dc] pl-[2px]">Grid Annotation - Frame</li>
        <li className="flex h-[14px] items-center bg-[#f5f2dc] pl-[2px]">Frame Annotation1</li>
      </ul>
      <span className="w-[3px] border-l border-[#777] bg-[#e6e6e8]" />
      <RowsPane />
      <div className="ml-[2px] flex-1 bg-black" />
    </div>
  </section>
);

const paletteButton = "flex h-[14px] w-[14px] items-center justify-center";

const ElementSelection = () => (
  <section className="absolute top-[66px] left-[1022px] flex h-[81px] w-[182px] flex-col border border-[#aaa] bg-[#efefef] shadow-[0_1px_4px_#0006]">
    <header className="flex h-5 items-center bg-white pr-[10px] pl-[5px] text-[#888]">
      <Icon><path d="M2 11c2-8 4-9 8-10M3 11l6-4M6 4l5 6" stroke="#555" strokeWidth="1.3" /><circle cx="8" cy="8" r="3" stroke="#666" /></Icon>
      <h2 className="ml-[2px] flex-1">Element Selection</h2>
      <div className="flex items-center gap-5">
        <Icon className="size-[10px]"><path d="M2 6.5h8" stroke="#aaa" /></Icon>
        <Icon className="size-[10px]"><path d="M2 2h8v8H2z" stroke="#ddd" /></Icon>
        <button aria-label="Close palette"><Icon className="size-[10px]"><path d="M2 2l8 8M10 2l-8 8" stroke="#777" /></Icon></button>
      </div>
    </header>
    <div className="flex flex-1 flex-col justify-between px-[7px] pt-2 pb-[7px]">
      <div className="flex items-center gap-[13px]">
        <div className="flex h-4 w-[74px] items-center border-t border-l border-[#bbb] text-[#2d86b8]">
          <button aria-label="Individual" className={`${paletteButton} bg-[#8fbbe4]`}><Icon><path d="M6 1l5 5-5 5-5-5zM6 1v10M1 6h10" stroke="#2f74ad" /></Icon></button>
          <button aria-label="Block" className={paletteButton}><Icon><path d="M1 3h10v6H1z" stroke="currentColor" strokeDasharray="2 1.5" /></Icon></button>
          <button aria-label="Shape" className={paletteButton}><Icon><path d="M3 3h8L9 9H1z" stroke="currentColor" strokeDasharray="2 1.5" /></Icon></button>
          <button aria-label="Circle" className={paletteButton}><Icon><circle cx="6" cy="6" r="4.5" stroke="currentColor" strokeDasharray="2 1.5" /></Icon></button>
          <button aria-label="Line" className={paletteButton}><Icon><path d="M1 11L11 1" stroke="currentColor" strokeDasharray="4 1.5" strokeWidth="1.3" /></Icon></button>
        </div>
        <Icon box="0 0 16 16" className="size-4"><path d="M1 1h11v10H1z" fill="#2f7cae" stroke="#234" /><circle cx="11" cy="11" r="3.5" stroke="#cf2027" strokeWidth="1.5" fill="#fff" /><path d="M8.5 8.5l5 5" stroke="#cf2027" strokeWidth="1.5" /></Icon>
      </div>
      <div className="flex items-center gap-[13px]">
        <div className="flex h-4 w-[74px] items-center border-t border-l border-[#bbb] text-[#1c7cc4]">
          <button aria-label="New" className={`${paletteButton} bg-[#8fbbe4]`}><Icon><circle cx="6" cy="5" r="4" stroke="#2f74ad" strokeDasharray="1.5 1" /><path d="M6 3v8l2-2 2 3 1-1-2-3h2z" fill="#111" /></Icon></button>
          <button aria-label="Add" className={paletteButton}><Icon><path d="M6 2v8M2 6h8" stroke="currentColor" strokeWidth="2.5" /></Icon></button>
          <button aria-label="Subtract" className={paletteButton}><Icon><path d="M1 6h10" stroke="currentColor" strokeWidth="2.5" /></Icon></button>
          <button aria-label="Invert" className={paletteButton}><Icon><path d="M2 2h8v8H2z" stroke="currentColor" fill="#fff" /><path d="M2 10V2h8z" fill="currentColor" /></Icon></button>
          <button aria-label="Select all" className={paletteButton}><Icon><circle cx="6" cy="6" r="5" stroke="#337" strokeDasharray="2 1.5" /><path d="M5 4h2M3 7.5h2M7 7.5h2" stroke="#333" strokeWidth="1.8" /></Icon></button>
        </div>
        <Icon box="0 0 16 16" className="size-4"><path d="M1 1h11v10H1z" fill="#aaa" stroke="#777" /><path d="M9 5v9l2-2 2 3 1-1-2-3h3z" fill="#666" /></Icon>
        <span className="ml-auto self-end"><Caret className="text-black" /></span>
      </div>
    </div>
  </section>
);

const snapIcons = [
  { label: "Keypoint", path: "M1 14l7-4h5V2", dot: [8, 10] },
  { label: "Near", path: "M3 13h4l5-9M2 3h12M2 5.5h12M2 8h12M2 10.5h12M2 13h12M5 1v14M8 1v14M11 1v14", dot: [7, 12], active: true },
  { label: "Midpoint", path: "M1 15L15 1", dot: [8, 8] },
  { label: "Center", path: "M8 1a7 7 0 1 1-.01 0", dot: [8, 8] },
  { label: "Origin", path: "M8 3a5 5 0 1 1-.01 0M8 0v3M8 13v3M0 8h3M13 8h3M2 2l2.5 2.5M11.5 11.5L14 14M14 2l-2.5 2.5M4.5 11.5L2 14", dot: [8, 8] },
  { label: "Bisector", path: "M3 14c-2-5 1-5 4-5s8-1 6-4-3-1-3-3", dot: [7, 9] },
  { label: "Intersection", path: "M2 2l12 12M14 2L2 14", dot: [8, 8] },
  { label: "Tangent", path: "M1 3h14M3 15c0-13 10-13 10 0", muted: true },
  { label: "Perpendicular", path: "M1 14h14M13 14V2M9 14v-4h4", muted: true },
];

const circleArrow = "M8 4L4 8l4 4V9.5h4v-3H8z";

const BottomBar = () => (
  <div className="flex h-[22px] shrink-0 bg-[#d4d4d5]">
    <div className="flex w-[526px] items-center bg-[#f0f0f0] pl-[2px]">
      <Grip />
      <button aria-label="Back" className="ml-[3px]"><Icon box="0 0 16 16" className="size-4"><circle cx="8" cy="8" r="7.5" fill="#3f9b3d" stroke="#2d7a2e" /><path d={circleArrow} fill="#fff" /></Icon></button>
      <span className="ml-1"><Caret className="text-[#111]" /></span>
      <button aria-label="Forward" className="ml-[3px]"><Icon box="0 0 16 16" className="size-4 -scale-x-100"><circle cx="8" cy="8" r="7.5" fill="#c4c4c4" stroke="#aaa" /><path d={circleArrow} fill="#fff" /></Icon></button>
      <span className="ml-[3px]"><Caret className="text-[#888]" /></span>
      <Icon box="0 0 18 16" className="ml-[3px] h-[15px] w-[17px]"><path d="M1 8l4-3 12 3v4l-5 3L2 12z" fill="#8b8e96" /><path d="M3 6l5-2 7 4-6 2z" fill="#b8bbc3" /><path d="M11 7l3-5" stroke="#777" strokeWidth="1.3" /></Icon>
      <span className="ml-[3px]"><Caret className="text-[#111]" /></span>
      <label className="ml-[4px] flex h-[14px] w-[100px] items-center gap-[3px] border border-[#b5b5b5] bg-[#e1e1e1] pr-[3px] pl-px text-[#333]">
        <Windows className="h-[11px] w-3" />
        <select aria-label="View group" className="w-full appearance-none leading-3"><option>Multi-Model Views</option></select>
        <Caret className="text-[#111]" />
      </label>
      <span className="ml-[5px]"><Windows className="h-[15px] w-4" /></span>
      <Divider className="mx-[2px] h-[14px]" />
      <div className="flex gap-px">
        {[1, 2, 3, 4, 5, 6, 7, 8].map((n) => (
          <button key={n} className={`h-[13px] w-[10px] border border-[#aaa] text-center leading-[11px] ${n === 1 || n === 4 ? "bg-[#6ba6dd] text-[#111]" : "bg-white text-[#444]"}`}>{n}</button>
        ))}
      </div>
      <span className="ml-[2px]"><Grip /></span>
      <button aria-label="AccuSnap" className="ml-[4px] flex h-[19px] w-[19px] items-center justify-center bg-[#6ea4cf]">
        <Icon className="size-4"><path d="M2 2l8 8M10 2l-8 8" stroke="#ffdc5d" strokeWidth="2" /></Icon>
      </button>
      <Divider className="mx-px h-4" />
      <div className="flex">
        {snapIcons.map((s) => (
          <button key={s.label} aria-label={s.label} className={`flex h-[19px] w-[19px] items-center justify-center ${s.active ? "bg-[#6ea4cf]" : ""}`}>
            <Icon box="0 0 16 16" className="size-4">
              <path d={s.path} stroke={s.muted ? "#999" : "#333"} strokeWidth={s.active ? "0.5" : "1.4"} />
              {s.dot && <circle cx={s.dot[0]} cy={s.dot[1]} r="1.8" fill="#51b5ee" stroke="#2277ac" />}
            </Icon>
          </button>
        ))}
      </div>
      <Divider className="mx-px h-4" />
      <Icon box="0 0 16 16" className="size-4">
        <path d="M2 2h12v12H2z" stroke="#456" strokeWidth="1.3" />
        <path d="M2 .5v3M14 .5v3M2 12.5v3M14 12.5v3M8 6.5v3" stroke="#2493d8" strokeWidth="3" />
      </Icon>
    </div>
  </div>
);

const StatusBar = () => (
  <footer className="flex h-[19px] shrink-0 items-center border-t border-[#d9d9d9] bg-[#f0f0f0] pr-[6px] pl-[2px] text-[#333]">
    <span className="w-[193px]">New Node &gt; Identify element to add to set</span>
    <Grip />
    <Divider className="ml-5 h-[14px]" />
    <div className="ml-auto flex items-center">
      <Icon className="size-[11px]"><path d="M1 10l3-2h5V1" stroke="#3383b5" /><circle cx="5" cy="8" r="1.3" fill="#3383b5" /></Icon>
      <Icon className="ml-[7px] size-[10px]"><path d="M2 5h8v6H2z" fill="#a28d42" /><path d="M4 5V2h4v3" stroke="#555" strokeWidth="1.5" /></Icon>
      <span className="ml-[7px] w-[88px]">Default</span>
      <div className="flex w-[147px] items-center justify-start gap-[22px]">
        <Divider className="h-4" /><Divider className="h-4" /><Divider className="h-4" /><Divider className="h-4" /><Divider className="h-4" />
      </div>
      <Icon className="size-[11px]"><path d="M2 2h9l-2 2v7H1V9h2z" stroke="#888" fill="#fff" /></Icon>
      <Divider className="ml-3 h-4" /><Divider className="ml-[20px] h-4" /><Divider className="ml-5 h-4" /><Divider className="ml-[20px] h-4" />
      <Icon className="ml-[9px] size-[10px]"><path d="M2 1h8v10H2z" stroke="#999" /><path d="M4 4h4v5H4z" fill="#aaa" /></Icon>
      <Divider className="mx-[5px] h-4" />
      <Icon className="size-3"><circle cx="5" cy="5" r="4" stroke="#3383b5" /><path d="M1 5h8M5 1v8" stroke="#3383b5" /><path d="M6 6l5 5M11 6l-5 5" stroke="#c92b2b" strokeWidth="1.5" /></Icon>
    </div>
  </footer>
);

const App = () => (
  <div className="relative flex h-screen min-w-[1240px] flex-col overflow-hidden border-t-2 border-l-2 border-t-[#6da5c8] border-l-[#0a5fae] bg-[#f0f0f0] font-[Roboto,sans-serif] text-[8px] leading-[10px] text-[#333]">
    <TitleBar />
    <RibbonTabs />
    <Ribbon />
    <div className="flex min-h-0 flex-1">
      <Explorer />
      <span className="w-[5px] shrink-0 border-r border-[#555] bg-[#9a9da5]" />
      <Workspace />
    </div>
    <BottomBar />
    <StatusBar />
    <div className="absolute -top-[2px] -left-[2px]">
      <ElementSelection />
      <ManageAnnotations />
      <Icon box="0 0 10 15" className="absolute top-[417px] left-[885px] h-[15px] w-[10px]">
        <path d="M1 1v11l3-2.5 2 4 2-1-2-4h3.5z" fill="#fff" stroke="#333" strokeWidth="0.6" />
      </Icon>
    </div>
  </div>
);

export default App;
